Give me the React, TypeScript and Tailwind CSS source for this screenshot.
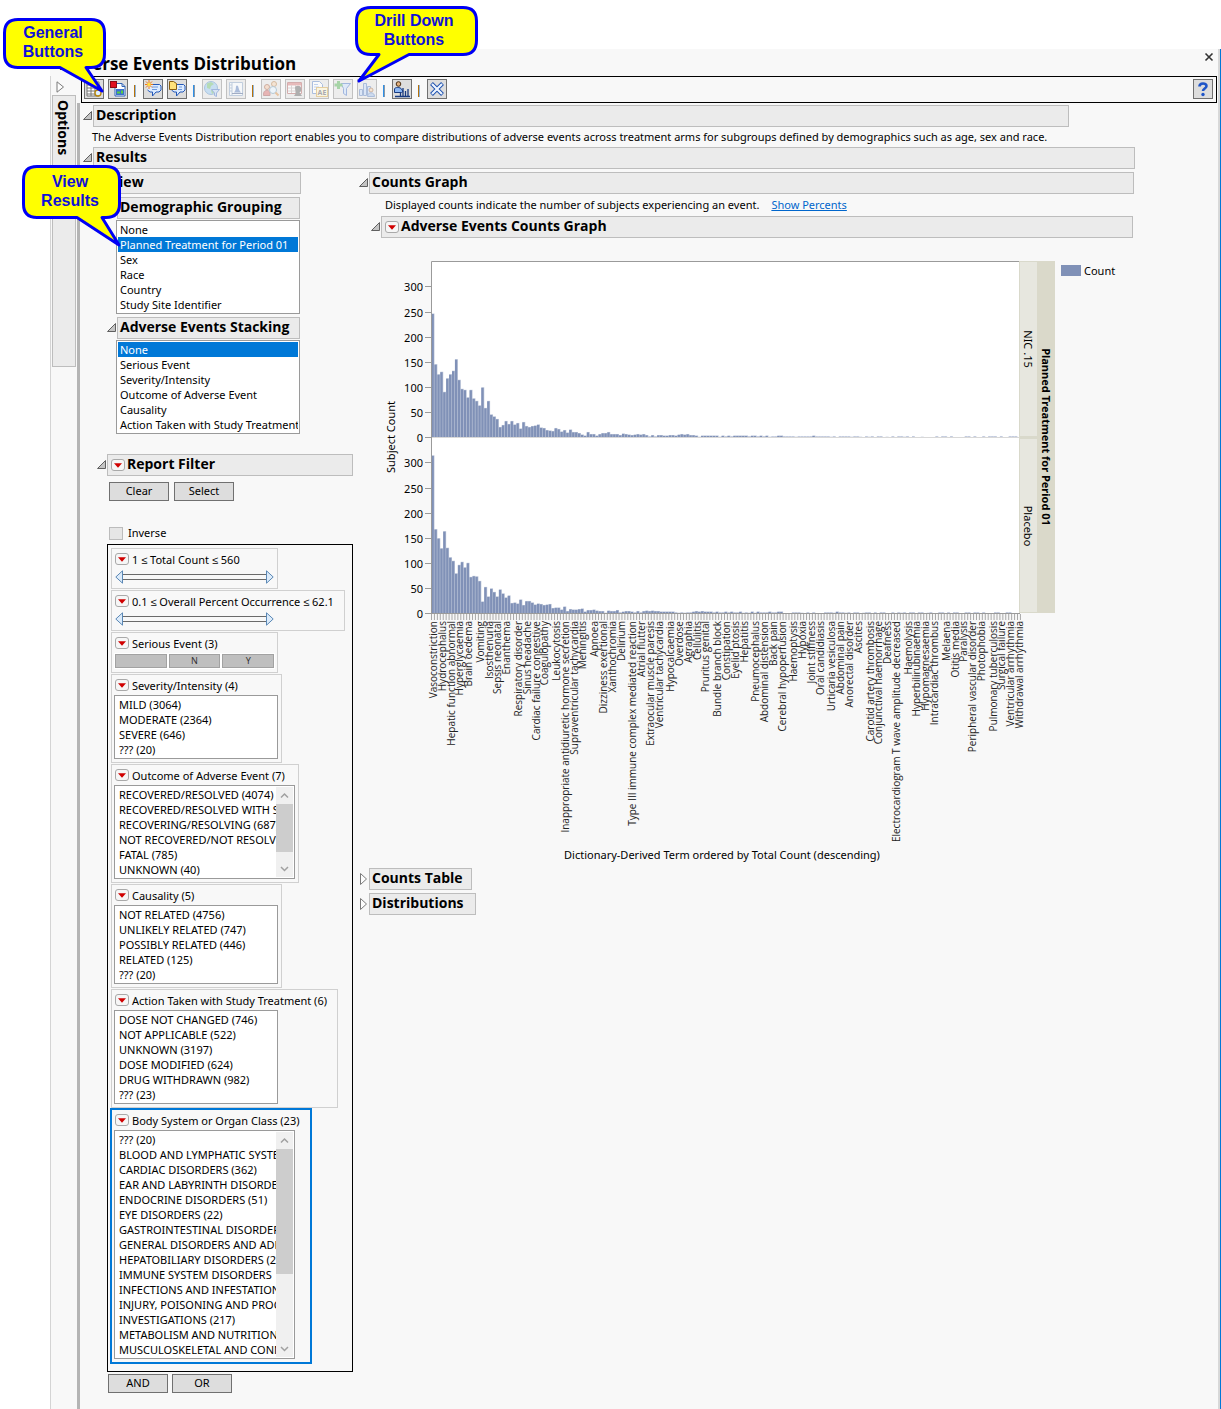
import { useState } from "react";
import type { ReactNode } from "react";

const groupings = ["None", "Planned Treatment for Period 01", "Sex", "Race", "Country", "Study Site Identifier"];

const stackings = [
  "None",
  "Serious Event",
  "Severity/Intensity",
  "Outcome of Adverse Event",
  "Causality",
  "Action Taken with Study Treatment",
];

const severities = ["MILD (3064)", "MODERATE (2364)", "SEVERE (646)", "??? (20)"];

const outcomes = [
  "RECOVERED/RESOLVED (4074)",
  "RECOVERED/RESOLVED WITH SEQUELAE (142)",
  "RECOVERING/RESOLVING (687)",
  "NOT RECOVERED/NOT RESOLVED (346)",
  "FATAL (785)",
  "UNKNOWN (40)",
];

const causalities = [
  "NOT RELATED (4756)",
  "UNLIKELY RELATED (747)",
  "POSSIBLY RELATED (446)",
  "RELATED (125)",
  "??? (20)",
];

const actions = [
  "DOSE NOT CHANGED (746)",
  "NOT APPLICABLE (522)",
  "UNKNOWN (3197)",
  "DOSE MODIFIED (624)",
  "DRUG WITHDRAWN (982)",
  "??? (23)",
];

const bodySystems = [
  "??? (20)",
  "BLOOD AND LYMPHATIC SYSTEM DISORDERS",
  "CARDIAC DISORDERS (362)",
  "EAR AND LABYRINTH DISORDERS",
  "ENDOCRINE DISORDERS (51)",
  "EYE DISORDERS (22)",
  "GASTROINTESTINAL DISORDERS",
  "GENERAL DISORDERS AND ADMINISTRATION",
  "HEPATOBILIARY DISORDERS (207)",
  "IMMUNE SYSTEM DISORDERS",
  "INFECTIONS AND INFESTATIONS",
  "INJURY, POISONING AND PROCEDURAL",
  "INVESTIGATIONS (217)",
  "METABOLISM AND NUTRITION",
  "MUSCULOSKELETAL AND CONNECTIVE",
];

// subject counts per term, ordered by total count
const nicCounts = [
  246, 145, 125, 130, 90, 117, 125, 132, 155, 114, 96, 94, 79, 94, 77, 72, 63, 99, 58, 72, 45, 41, 36, 20, 24, 32, 26,
  32, 25, 28, 17, 30, 22, 20, 22, 23, 25, 19, 18, 14, 13, 12, 18, 16, 11, 14, 9, 15, 10, 10, 8, 5, 3, 10, 6, 6, 3, 6, 8,
  8, 10, 6, 6, 6, 4, 7, 6, 5, 4, 5, 6, 5, 6, 4, 2, 4, 2, 4, 4, 3, 3, 4, 4, 3, 5, 6, 5, 6, 4, 4, 3, 1, 3, 3, 3, 3, 3, 3,
  1, 3, 2, 3, 2, 3, 3, 3, 3, 3, 2, 3, 3, 2, 3, 2, 3, 1, 2, 2, 3, 3, 2, 2, 2, 2, 1, 2, 2, 2, 2, 2, 3, 2, 2, 2, 2, 2, 1, 2,
  0, 2, 2, 2, 2, 1, 2, 2, 1, 0, 2, 1, 2, 0, 2, 2, 0, 1, 0, 2, 0, 2, 2, 1, 2, 0, 2, 0, 0, 1, 0, 0, 0, 0, 2, 0, 2, 2, 0, 2,
  0, 0, 0, 0, 2, 2, 0, 2, 0, 0, 2, 0, 2, 2, 2, 0, 2, 0, 0, 2, 2, 2,
];

const placeboCounts = [
  314, 167, 149, 129, 163, 130, 111, 104, 79, 96, 102, 91, 100, 72, 74, 73, 64, 23, 52, 33, 49, 42, 33, 47, 39, 31, 35,
  20, 21, 19, 27, 16, 24, 24, 21, 17, 19, 18, 16, 17, 18, 10, 11, 11, 7, 13, 4, 8, 7, 7, 8, 9, 3, 6, 6, 7, 5, 4, 4, 1, 5,
  4, 4, 6, 2, 3, 4, 4, 3, 2, 4, 2, 4, 5, 4, 5, 4, 4, 3, 3, 3, 3, 3, 2, 1, 2, 1, 2, 2, 3, 4, 3, 4, 3, 3, 3, 2, 3, 2, 2, 3,
  2, 3, 2, 2, 3, 1, 2, 1, 3, 1, 3, 2, 2, 2, 3, 2, 2, 3, 3, 0, 0, 0, 2, 2, 2, 1, 0, 2, 0, 2, 0, 0, 0, 2, 2, 2, 1, 3, 2, 2,
  1, 2, 0, 2, 2, 0, 1, 2, 2, 0, 2, 0, 2, 2, 0, 0, 2, 0, 2, 1, 2, 0, 2, 2, 0, 2, 2, 0, 1, 2, 0, 0, 2, 2, 0, 2, 0, 2, 2, 0,
  0, 2, 2, 0, 2, 2, 0, 2, 0, 0, 0, 2, 2, 0, 0, 2, 2, 0, 0, 0,
];

const termLabels: [number, string][] = [
  [0, "Vasoconstriction"],
  [3, "Hydrocephalus"],
  [6, "Hepatic function abnormal"],
  [9, "Hyperglycaemia"],
  [12, "Brain oedema"],
  [16, "Vomiting"],
  [19, "Isosthenuria"],
  [22, "Sepsis neonatal"],
  [25, "Enanthema"],
  [29, "Respiratory disorder"],
  [32, "Sinus headache"],
  [35, "Cardiac failure congestive"],
  [38, "Coagulopathy"],
  [42, "Leukocytosis"],
  [45, "Inappropriate antidiuretic hormone secretion"],
  [48, "Supraventricular tachycardia"],
  [51, "Meningitis"],
  [55, "Apnoea"],
  [58, "Dizziness exertional"],
  [61, "Xanthochromia"],
  [64, "Delirium"],
  [68, "Type III immune complex mediated reaction"],
  [71, "Atrial flutter"],
  [74, "Extraocular muscle paresis"],
  [77, "Ventricular tachycardia"],
  [81, "Hypocalcaemia"],
  [84, "Overdose"],
  [87, "Agraphia"],
  [90, "Cellulitis"],
  [93, "Pruritus genital"],
  [97, "Bundle branch block"],
  [100, "Constipation"],
  [103, "Eyelid ptosis"],
  [106, "Hepatitis"],
  [110, "Pneumocephalus"],
  [113, "Abdominal distension"],
  [116, "Back pain"],
  [119, "Cerebral hypoperfusion"],
  [123, "Haemoptysis"],
  [126, "Hypoxia"],
  [129, "Joint stiffness"],
  [132, "Oral candidiasis"],
  [136, "Urticaria vesiculosa"],
  [139, "Abdominal pain"],
  [142, "Anorectal disorder"],
  [145, "Ascites"],
  [149, "Carotid artery thrombosis"],
  [152, "Conjunctival haemorrhage"],
  [155, "Deafness"],
  [158, "Electrocardiogram T wave amplitude decreased"],
  [162, "Haemolysis"],
  [165, "Hyperbilirubinaemia"],
  [168, "Hypomagnesaemia"],
  [171, "Intracardiac thrombus"],
  [175, "Melaena"],
  [178, "Otitis media"],
  [181, "Paralysis"],
  [184, "Peripheral vascular disorder"],
  [187, "Photophobia"],
  [191, "Pulmonary tuberculosis"],
  [194, "Surgical failure"],
  [197, "Ventricular arrhythmia"],
  [200, "Withdrawal arrhythmia"],
];

function Disclosure({ open = true }: { open?: boolean }) {
  return (
    <svg viewBox="0 0 9 12" className="mr-px h-3 w-[9px] shrink-0" aria-hidden="true">
      {open ? (
        <path d="M8.5 1.5v8h-8z" fill="#c4c4c4" stroke="#606060" />
      ) : (
        <path d="M1.5.5l6 5.5-6 5.5z" fill="#fdfdfd" stroke="#7a7a7a" />
      )}
    </svg>
  );
}

function RedTriangle({ label }: { label: string }) {
  return (
    <button
      type="button"
      aria-label={label}
      className="flex h-3 w-[14px] shrink-0 items-center justify-center rounded-[3px] border border-[#a9a9a9] bg-[#f6f6f6]"
    >
      <svg viewBox="0 0 8 5" className="h-[5px] w-2" aria-hidden="true">
        <path d="M0 .3h8L4 4.8z" fill="#d00000" />
      </svg>
    </button>
  );
}

function Header({ title, open, menu, className = "" }: { title: string; open?: boolean; menu?: boolean; className?: string }) {
  return (
    <div className={`flex items-center ${className}`}>
      <Disclosure open={open} />
      <div
        className={`flex h-[22px] flex-1 items-center gap-0.5 border border-[#bdbdbd] bg-[#ebebeb] ${menu ? "px-[3px]" : "px-0.5"}`}
      >
        {menu && <RedTriangle label={`${title} menu`} />}
        <h2 className="pb-0.5 text-[14px] leading-[18px] font-bold whitespace-nowrap">{title}</h2>
      </div>
    </div>
  );
}

function ListBox({
  label,
  items,
  initial = [],
  thumb,
  className = "",
  pad = "px-[3px]",
}: {
  label: string;
  items: string[];
  initial?: string[];
  thumb?: string;
  className?: string;
  pad?: string;
}) {
  const [selected, setSelected] = useState<string[]>(initial);
  return (
    <div className={`flex border border-[#9a9a9a] bg-white p-px ${className}`}>
      <select
        multiple
        aria-label={label}
        size={items.length}
        value={selected}
        onChange={(e) => setSelected(Array.from(e.target.selectedOptions, (o) => o.value))}
        className="block min-w-0 flex-1 appearance-none overflow-hidden border-0 bg-transparent p-0 outline-none"
      >
        {items.map((item) => (
          <option
            key={item}
            value={item}
            className={`h-[15px] min-h-0 overflow-hidden py-0 font-['Noto_Sans',sans-serif] text-[11px] leading-3 text-black checked:bg-[linear-gradient(#0078d7,#0078d7)] checked:text-white ${pad}`}
          >
            {item}
          </option>
        ))}
      </select>
      {thumb && (
        <div className="flex w-[17px] shrink-0 flex-col bg-[#f0f0f0]" aria-hidden="true">
          <svg viewBox="0 0 17 17" className="h-[17px] w-[17px]">
            <path d="M5 10.5L8.500 7l3.500 3.500" fill="none" stroke="#a0a0a0" strokeWidth="1.500" />
          </svg>
          <div className={`bg-[#cdcdcd] ${thumb}`} />
          <svg viewBox="0 0 17 17" className="mt-auto h-[17px] w-[17px]">
            <path d="M5 7l3.500 3.500L12 7" fill="none" stroke="#a0a0a0" strokeWidth="1.500" />
          </svg>
        </div>
      )}
    </div>
  );
}

function FilterGroup({ title, active, children }: { title: string; active?: boolean; children: ReactNode }) {
  return (
    <section
      className={`border px-0.5 pb-[3px] ${active ? "border-[#0078d7] ring-1 ring-[#0078d7]" : "border-[#d0d0d0]"}`}
    >
      <div className="flex h-5 items-center gap-[3px] pr-2 pl-px">
        <RedTriangle label={`${title} menu`} />
        <h3 className="pt-0.5 text-[11px] leading-4 whitespace-nowrap">{title}</h3>
      </div>
      {children}
    </section>
  );
}

function RangeSlider({ label, min, max, step }: { label: string; min: number; max: number; step: number }) {
  return (
    <div className="relative w-[161px] py-px pl-px">
      <svg viewBox="0 0 159 14" className="h-[14px] w-[159px]" aria-hidden="true">
        <rect x="7.500" y="4.500" width="144" height="5" fill="#f8f8f8" stroke="#6a6a6a" />
        <path d="M7.500 .8v12.400L.8 7z" fill="#dcebfa" stroke="#5b88b5" />
        <path d="M151.500 .8v12.400L158.200 7z" fill="#dcebfa" stroke="#5b88b5" />
      </svg>
      <input
        type="range"
        aria-label={`${label} minimum`}
        min={min}
        max={max}
        step={step}
        defaultValue={min}
        className="absolute inset-y-0 left-0 w-1/2 opacity-0"
      />
      <input
        type="range"
        aria-label={`${label} maximum`}
        min={min}
        max={max}
        step={step}
        defaultValue={max}
        className="absolute inset-y-0 right-0 w-1/2 opacity-0"
      />
    </div>
  );
}

function PushButton({ children }: { children: ReactNode }) {
  return (
    <button
      type="button"
      className="flex h-[19px] w-[60px] items-center justify-center border border-[#707070] bg-[#dddddd] text-[11px]"
    >
      {children}
    </button>
  );
}

function ToolButton({ label, disabled, children }: { label: string; disabled?: boolean; children: ReactNode }) {
  return (
    <button
      type="button"
      aria-label={label}
      disabled={disabled}
      className="block h-5 w-5 shrink-0 border border-[#707070] bg-[#dddddd] disabled:opacity-40"
    >
      <svg viewBox="0 0 18 18" className="h-[18px] w-[18px]" fill="none" aria-hidden="true">
        {children}
      </svg>
    </button>
  );
}

function Separator({ blue }: { blue?: boolean }) {
  return (
    <div
      className={`mt-1.5 mr-[3px] ml-0.5 h-3 w-0.5 shrink-0 border-r ${
        blue ? "border-[#8a9aa8] bg-[#2f90e8]" : "border-[#8fb5dd] bg-[#b8720a]"
      }`}
    />
  );
}

const bubble = "M4 4.500h11.500l1.500 1.500v4l-2 2h-3l-3.500 4v-4H6L3.500 10";

function Toolbar() {
  return (
    <div className="ml-1 mr-px flex items-start gap-1 border border-black pt-0.5 pr-[3px] pb-[3px] pl-0.5">
      <ToolButton label="View data">
        <path d="M2 2h12v14H2z" fill="#fff" stroke="#777" />
        <path d="M2 5h12M2 8h12M2 11h12M2 14h12M6 2v14M10 2v14" stroke="#777" />
        <circle cx="13" cy="13" r="3" fill="#dff0ff" stroke="#b8860b" strokeWidth="1.300" />
      </ToolButton>
      <ToolButton label="Create static report">
        <path d="M6 3.500h7l3 3V16H6z" fill="#fff" stroke="#2f62b5" />
        <path d="M13 3.500v3h3" stroke="#2f62b5" />
        <rect x="7" y="9" width="8" height="6" fill="#3a6fd0" />
        <path d="M8 13.500h3v-2H8zM12 13.500h2v-3h-2z" fill="#58d040" />
        <rect x="1.500" y="1.500" width="6" height="6" fill="#e01020" stroke="#8c0a14" />
      </ToolButton>
      <Separator />
      <ToolButton label="Add note">
        <path d={bubble} fill="#dcebff" stroke="#2458b8" />
        <path d="M8 7h6M8 9.500h5" stroke="#6c98de" />
        <path d="M5 0v9M1 4.500h8M2 1.500l6 6M8 1.500l-6 6" stroke="#f07818" />
        <circle cx="5" cy="4.500" r="1.700" fill="#ffe040" />
      </ToolButton>
      <ToolButton label="View notes">
        <path d={bubble} fill="#dcebff" stroke="#2458b8" />
        <path d="M11 7h3M10 9.500h4" stroke="#6c98de" />
        <path d="M1.500 1.500h4l3 2v6h-7z" fill="#ffe27a" stroke="#8a5f10" />
      </ToolButton>
      <Separator blue />
      <ToolButton label="Filter geography" disabled>
        <circle cx="8" cy="8" r="6.500" fill="#7fb8ea" stroke="#3a7ab8" />
        <path d="M4 3.500l4-1.500 3 2-3 2-1 3-3-1zM8 10l3-1 1 3-3 2z" fill="#52b052" />
        <path d="M8.500 9.500h8l-3 3.500v3.500l-2-1V13z" fill="#a8c8f0" stroke="#2458b8" />
      </ToolButton>
      <ToolButton label="Show distribution" disabled>
        <path d="M2.500 2.500h13v13h-13z" fill="#f4f8ff" stroke="#7090b8" />
        <path d="M5 2v14M3 5h2M3 8h2M3 11h2" stroke="#7090b8" />
        <path d="M10 5.500c2 0 1 4 4 7H7c3-3 1-7 3-7z" fill="#3a66b0" />
        <path d="M5 13.500h11" stroke="#223f78" />
      </ToolButton>
      <Separator />
      <ToolButton label="Profile subjects" disabled>
        <circle cx="5" cy="7" r="2.500" fill="#f0b890" stroke="#904020" />
        <path d="M1.500 15.500c0-4 1-5 3.500-5s3 1 3 5z" fill="#d05050" stroke="#903030" />
        <circle cx="12" cy="4" r="2.500" fill="#f0c8a0" stroke="#a06020" />
        <circle cx="11" cy="10" r="3.500" fill="#dff0ff" stroke="#5080a0" />
        <path d="M13.500 12.500l3 3" stroke="#d07820" strokeWidth="2" />
      </ToolButton>
      <ToolButton label="Show subjects" disabled>
        <path d="M1.500 2.500h14v11h-14z" fill="#fff" stroke="#a04040" />
        <path d="M2 3h13v2.500H2z" fill="#d06060" />
        <path d="M2 8h13M2 11h13M5.500 5v8M9.500 5v8" stroke="#b0a0a0" />
        <path d="M9 8c0-3 6-3 6 0 1 1 0 4-1.500 4.500L16 16H8l2-3z" fill="#444" />
      </ToolButton>
      <ToolButton label="Adverse event narrative" disabled>
        <path d="M2.500 1.500h7l3 3v9h-10z" fill="#fff" stroke="#3a6ab8" />
        <path d="M4 4.500h4M4 7h5M4 9.500h2" stroke="#6c98de" />
        <rect x="6.500" y="7.500" width="11" height="9" fill="#fff2c0" stroke="#c89020" />
        <text x="12" y="15" textAnchor="middle" fontSize="7" fontWeight="700" fill="#334">
          AE
        </text>
      </ToolButton>
      <ToolButton label="Add filter" disabled>
        <path d="M7 3.500h9.500l-4 5v7l-3-2v-5z" fill="#b8d4f8" stroke="#2458b8" />
        <path d="M4.500 1v8M.5 5h8" stroke="#30a030" strokeWidth="3" />
      </ToolButton>
      <ToolButton label="Cluster subjects" disabled>
        <path d="M1.500 15.500V9.500h3v6zM5.500 15.500v-12h3v12zM9.500 15.500v-9h3v3" fill="#b0ccf4" stroke="#3a66b0" />
        <circle cx="13" cy="10" r="2" fill="#f0c8a0" stroke="#905020" />
        <path d="M9.500 16.500c0-5 7-5 7 0z" fill="#8fb0e0" stroke="#3a66b0" />
      </ToolButton>
      <Separator blue />
      <ToolButton label="Demographic counts">
        <circle cx="5.500" cy="4" r="2.300" fill="#e0b080" stroke="#4a2c10" />
        <path d="M1.500 12.500V9c0-2 6-2 7 0l1.500 2.500-1.500 1z" fill="#8db8f4" stroke="#173a80" />
        <path d="M7.500 16v-3M10 16V8M12.500 16v-5M15 16V9M2 16.500h15" stroke="#173a80" strokeWidth="1.300" />
      </ToolButton>
      <Separator />
      <ToolButton label="Close all">
        <path d="M3.500 3.500l11 11M14.500 3.500l-11 11" stroke="#1b4fae" strokeWidth="4" />
        <path d="M4 4l10 10M14 4L4 14" stroke="#eef5ff" strokeWidth="2.200" />
      </ToolButton>
      <div className="ml-auto">
        <ToolButton label="Help">
          <path d="M5.500 6.500c0-4 7-4 7-.5 0 2.500-3.500 2.500-3.500 5" stroke="#1f55c8" strokeWidth="2.600" />
          <circle cx="9" cy="14.500" r="1.700" fill="#1f55c8" />
        </ToolButton>
      </div>
    </div>
  );
}

const PITCH = 2.93;

function Bars({ counts, base }: { counts: number[]; base: number }) {
  return (
    <g>
      {counts.slice(0, 201).map((count, i) => {
        const height = count * 0.502;
        return (
          <g key={i} fill={count < 3 ? "#b3bdd6" : "#8091b7"}>
            <rect x={431.5 + i * PITCH} y={base - height} width="2.93" height={height} opacity="0.55" />
            <rect x={431.5 + i * PITCH} y={base - height + 0.5} width="2.3" height={Math.max(height - 0.5, 0)} />
          </g>
        );
      })}
    </g>
  );
}

function YAxis({ base }: { base: number }) {
  return (
    <g>
      {[0, 50, 100, 150, 200, 250, 300].map((n) => {
        const y = Math.round(base - n * 0.502) + 0.5;
        return (
          <g key={n}>
            <path d={`M425 ${y}h6`} stroke="#9a9a9a" />
            <text x="423" y={y + 4} textAnchor="end" fontSize="11">
              {n}
            </text>
          </g>
        );
      })}
    </g>
  );
}

function CountsChart() {
  return (
    <svg
      viewBox="381 238 753 630"
      className="block h-auto w-full"
      role="img"
      aria-label="Subject counts by dictionary-derived term and planned treatment"
    >
      <rect x="431" y="261" width="589" height="352" fill="#fff" />
      <Bars counts={nicCounts} base={437} />
      <Bars counts={placeboCounts} base={613} />
      <path d="M431 437.500h589" stroke="#d8d8d8" />
      <path d="M431.500 613.500V261.500H1020" fill="none" stroke="#9a9a9a" />
      <path d="M431 613.500h589" stroke="#9a9a9a" />
      <YAxis base={437} />
      <YAxis base={613} />

      {Array.from({ length: 202 }, (_, i) => (
        <path key={i} d={`M${431.5 + i * PITCH} 614v6`} stroke="#a8a8a8" />
      ))}
      {termLabels.map(([i, term]) => (
        <text
          key={term}
          transform={`translate(${Math.round(433 + i * PITCH) + 4} 621) rotate(-90)`}
          textAnchor="end"
          fontSize="10"
          fontFamily="Open Sans, sans-serif"
          fill="#222"
        >
          {term}
        </text>
      ))}

      <rect x="1019" y="261" width="19" height="352" fill="#d9d9cb" />
      <rect x="1020" y="262" width="17" height="174" fill="#e7e7df" />
      <rect x="1020" y="439" width="17" height="173" fill="#e7e7df" />
      <rect x="1037" y="261" width="18" height="352" fill="#dad9ca" />
      <g fontSize="11" textAnchor="middle">
        <text transform="translate(1024 349) rotate(90)">NIC .15</text>
        <text transform="translate(1024 526) rotate(90)">Placebo</text>
        <text transform="translate(1042 437) rotate(90)" fontWeight="700">
          Planned Treatment for Period 01
        </text>
        <text transform="translate(395 437) rotate(-90)">Subject Count</text>
        <text x="722" y="859">
          Dictionary-Derived Term ordered by Total Count (descending)
        </text>
      </g>
      <rect x="1061" y="265" width="20" height="11" fill="#8091b7" />
      <text x="1084" y="275" fontSize="11">
        Count
      </text>
    </svg>
  );
}

function Callouts() {
  return (
    <svg
      viewBox="0 0 490 250"
      className="pointer-events-none absolute top-0 left-0 h-[250px] w-[490px]"
      fontFamily="Liberation Sans, Arial, sans-serif"
      fontSize="16"
      fontWeight="700"
      textAnchor="middle"
    >
      <g fill="#ffff00" stroke="#0000f5" strokeWidth="3" strokeLinejoin="round">
        <path d="M18 19.500h73q13.500 0 13.500 13.500v21q0 13.500-13.500 13.500h-5L102 91 60 67.500H18Q4.500 67.500 4.500 54V33Q4.500 19.500 18 19.500z" />
        <path d="M371 7.500h92q13.500 0 13.500 13.500v19q0 14.500-13.500 14.500h-54L359 81l20-26.500h-8q-14.500 0-14.500-14.500V21q0-13.500 14.500-13.500z" />
        <path d="M37 166.500h69q13.500 0 13.500 13.500v24q0 13.500-13.500 13.500h-4L119 245 77 217.500H37Q23.500 217.500 23.500 204v-24Q23.500 166.500 37 166.500z" />
      </g>
      <g fill="#1010d8">
        <text x="53" y="38">General</text>
        <text x="53" y="57">Buttons</text>
        <text x="414" y="26">Drill Down</text>
        <text x="414" y="45">Buttons</text>
        <text x="70" y="187">View</text>
        <text x="70" y="206">Results</text>
      </g>
    </svg>
  );
}

function ReportFilter() {
  return (
    <div className="mt-5">
      <Header title="Report Filter" menu />
      <div className="mt-1.5 ml-3 flex gap-[5px]">
        <PushButton>Clear</PushButton>
        <PushButton>Select</PushButton>
      </div>
      <label className="mt-[26px] ml-3 flex h-[13px] items-center gap-[5px] text-[11px]">
        <input type="checkbox" className="h-[13px] w-[14px] appearance-none border border-[#bcbcbc] bg-[#e6e6e6]" />
        Inverse
      </label>
      <div className="mt-1 ml-2.5 flex flex-col items-start gap-px border border-black px-[3px] pt-[3px] pb-2">
        <FilterGroup title="1 ≤ Total Count ≤ 560">
          <RangeSlider label="Total Count" min={1} max={560} step={1} />
        </FilterGroup>
        <FilterGroup title="0.1 ≤ Overall Percent Occurrence ≤ 62.1">
          <RangeSlider label="Overall Percent Occurrence" min={0.1} max={62.1} step={0.1} />
        </FilterGroup>
        <FilterGroup title="Serious Event (3)">
          <div className="flex w-[161px] gap-0.5 bg-white p-px text-[9px] text-[#333]">
            {["", "N", "Y"].map((value) => (
              <button
                key={value}
                type="button"
                aria-label={value || "Missing"}
                className="h-[14px] flex-1 border border-[#a2a2a2] bg-[#bfbfbf] leading-3"
              >
                {value}
              </button>
            ))}
          </div>
        </FilterGroup>
        <FilterGroup title="Severity/Intensity (4)">
          <ListBox label="Severity/Intensity" items={severities} className="mr-px w-[164px]" />
        </FilterGroup>
        <FilterGroup title="Outcome of Adverse Event (7)">
          <ListBox label="Outcome of Adverse Event" items={outcomes} thumb="h-12" className="mr-px w-[181px]" />
        </FilterGroup>
        <FilterGroup title="Causality (5)">
          <ListBox label="Causality" items={causalities} className="mr-px w-[164px]" />
        </FilterGroup>
        <FilterGroup title="Action Taken with Study Treatment (6)">
          <ListBox label="Action Taken with Study Treatment" items={actions} className="w-[164px]" />
        </FilterGroup>
        <FilterGroup title="Body System or Organ Class (23)" active>
          <ListBox label="Body System or Organ Class" items={bodySystems} thumb="h-[125px]" className="w-[181px]" />
        </FilterGroup>
      </div>
      <div className="mt-0.5 ml-[11px] flex gap-1">
        <PushButton>AND</PushButton>
        <PushButton>OR</PushButton>
      </div>
    </div>
  );
}

export default function App() {
  return (
    <div className="relative min-h-screen bg-white pt-[49px] pl-[50px] font-['Noto_Sans',sans-serif] text-black [&_h1]:font-['Open_Sans'] [&_h2]:font-['Open_Sans']">
      <div className="flex min-h-[calc(100vh-49px)] flex-col border-r border-[#0078d7] bg-[#f8f8f8]">
        <div className="flex flex-1 flex-col border-r-2 border-[#d8d8d8]">
          <header className="flex h-[27px] items-center justify-between pr-1 pl-2.5">
            <h1 className="pt-0.5 text-[17px] font-bold whitespace-nowrap">Adverse Events Distribution</h1>
            <button type="button" aria-label="Close" className="mb-3 h-2.5 w-2.5">
              <svg viewBox="0 0 10 10" className="h-2.5 w-2.5" aria-hidden="true">
                <path d="M1.500 1.500l7 7M8.500 1.500l-7 7" stroke="#333" strokeWidth="1.600" />
              </svg>
            </button>
          </header>

          <div className="flex flex-1">
            <aside className="flex w-[27px] shrink-0 flex-col border-l border-[#d4d4d4] pr-px pl-px">
              <svg viewBox="0 0 9 12" className="mt-[5px] mb-0.5 ml-1 h-3 w-[9px]" aria-hidden="true">
                <path d="M1 .8L7.500 6 1 11.200z" fill="#fdfdfd" stroke="#7a7a7a" />
              </svg>
              <button
                type="button"
                className="flex h-[272px] w-6 items-center justify-start border border-[#bdbdbd] bg-[#ebebeb] pt-1 pr-0.5 font-['Open_Sans'] text-[14px] leading-5 font-bold [writing-mode:vertical-rl]"
              >
                Options
              </button>
            </aside>

            <main className="flex min-w-0 flex-1 flex-col">
              <Toolbar />
              <div className="flex-1 border-l-[3px] border-[#b4b4b4] pl-[3px]">
                <Header title="Description" className="mt-0.5 mr-[149px]" />
                <p className="ml-[9px] text-[11px] leading-5">
                  The Adverse Events Distribution report enables you to compare distributions of adverse events across
                  treatment arms for subgroups defined by demographics such as age, sex and race.
                </p>
                <Header title="Results" className="mr-[83px]" />

                <div className="mt-[3px] mr-[84px] flex items-start gap-1.5">
                  <div className="ml-3.5 w-64 shrink-0">
                    <Header title="View" className="mr-[52px]" />
                    <div className="mt-[3px] mr-[53px] ml-2.5">
                      <Header title="Demographic Grouping" />
                      <ListBox
                        label="Demographic Grouping"
                        items={groupings}
                        initial={["Planned Treatment for Period 01"]}
                        className="mt-px ml-[9px]"
                        pad="px-0.5"
                      />
                      <Header title="Adverse Events Stacking" className="mt-[3px]" />
                      <ListBox
                        label="Adverse Events Stacking"
                        items={stackings}
                        initial={["None"]}
                        className="mt-px ml-[9px]"
                        pad="px-0.5"
                      />
                    </div>
                    <ReportFilter />
                  </div>

                  <div className="min-w-0 flex-1">
                    <Header title="Counts Graph" />
                    <p className="ml-[26px] text-[11px] leading-[22px]">
                      Displayed counts indicate the number of subjects experiencing an event.
                      <a href="#percents" className="ml-3 text-[#0066cc] underline">
                        Show Percents
                      </a>
                    </p>
                    <Header title="Adverse Events Counts Graph" menu className="mr-px ml-3" />
                    <div className="ml-[22px]">
                      <CountsChart />
                    </div>
                    <Header title="Counts Table" open={false} className="w-[113px]" />
                    <Header title="Distributions" open={false} className="mt-[3px] w-[117px]" />
                  </div>
                </div>
              </div>
            </main>
          </div>
        </div>
      </div>
      <Callouts />
    </div>
  );
}
